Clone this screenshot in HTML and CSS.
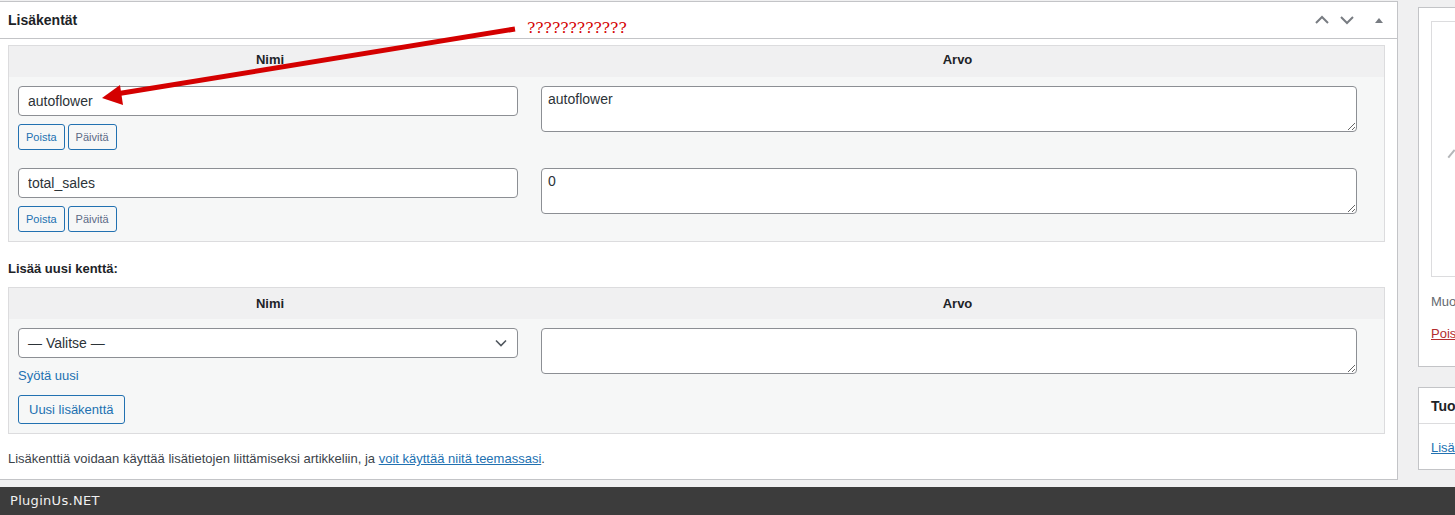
FILE: index.html
```html
<!DOCTYPE html>
<html lang="fi">
<head>
    <meta charset="UTF-8">
    <title>Lisäkentät</title>
    <link rel="stylesheet" href="styles.css">
</head>
<body>
    <div class="wrap">
        <div class="main-col">
            <div class="postbox">
                <div class="postbox-header">
                    <h2>Lisäkentät</h2>
                    <div class="handle-actions">
                        <svg width="14" height="10" viewBox="0 0 14 10"><path d="M1 8 L7 2 L13 8" fill="none" stroke="#787c82" stroke-width="2"/></svg>
                        <svg width="14" height="10" viewBox="0 0 14 10"><path d="M1 2 L7 8 L13 2" fill="none" stroke="#787c82" stroke-width="2"/></svg>
                        <svg class="toggle" width="10" height="8" viewBox="0 0 10 8"><path d="M1 7 L5 2 L9 7 Z" fill="#787c82"/></svg>
                    </div>
                </div>
                <div class="inside">
                    <div class="meta-table">
                        <div class="th">Nimi</div>
                        <div class="th">Arvo</div>

                        <div class="td left">
                            <input type="text" value="autoflower">
                            <div class="row-buttons">
                                <button class="btn-small">Poista</button>
                                <button class="btn-small grey">Päivitä</button>
                            </div>
                        </div>
                        <div class="td right"><textarea>autoflower</textarea></div>

                        <div class="td left">
                            <input type="text" value="total_sales">
                            <div class="row-buttons">
                                <button class="btn-small">Poista</button>
                                <button class="btn-small grey">Päivitä</button>
                            </div>
                        </div>
                        <div class="td right"><textarea>0</textarea></div>
                    </div>

                    <p class="new-title">Lisää uusi kenttä:</p>

                    <div class="meta-table second">
                        <div class="th">Nimi</div>
                        <div class="th">Arvo</div>
                        <div class="td left">
                            <div class="select">
                                <span>— Valitse —</span>
                                <svg width="12" height="8" viewBox="0 0 12 8"><path d="M1 1.5 L6 6.5 L11 1.5" fill="none" stroke="#50575e" stroke-width="1.6"/></svg>
                            </div>
                            <a class="enter-new" href="#">Syötä uusi</a>
                            <button class="btn">Uusi lisäkenttä</button>
                        </div>
                        <div class="td right"><textarea></textarea></div>
                    </div>

                    <p class="note">Lisäkenttiä voidaan käyttää lisätietojen liittämiseksi artikkeliin, ja <a href="#">voit käyttää niitä teemassasi</a>.</p>
                </div>
            </div>
        </div>

        <div class="side-col">
            <div class="sidebox first">
                <div class="thumb"><span class="mark"></span></div>
                <p class="muted">Muokkaa tai päivitä kuvaa</p>
                <p><a class="delete" href="#">Poista tuotekuva</a></p>
            </div>
            <div class="sidebox second">
                <div class="sidebox-header">Tuotegalleria</div>
                <p><a href="#">Lisää tuotegallerian kuvia</a></p>
            </div>
        </div>
    </div>

    <div class="footer-bar">PluginUs.NET</div>

    <!-- annotation over the screenshot -->
    <svg class="annotation" width="540" height="110" viewBox="0 0 540 110">
        <path d="M515 29 L116 94" stroke="#d40000" stroke-width="5" fill="none"/>
        <path d="M102 98 L120 85 L123 105 Z" fill="#d40000"/>
    </svg>
    <span class="annotation-text">????????????</span>
</body>
</html>
```

FILE: styles.css
```css
body {
    margin: 0;
    background-color: #f0f0f1;
    font-family: "Liberation Sans", Arial, sans-serif;
    font-size: 13px;
    color: #3c434a;
    height: 515px;
    overflow: hidden;
    position: relative;
}
.wrap {
    display: flex;
    gap: 20px;
    height: 487px;
}
.main-col {
    width: 1399px;
    margin-left: -1px;
    flex-shrink: 0;
}
.postbox {
    margin-top: 1px;
    background: #fff;
    border: 1px solid #c3c4c7;
    height: 477px;
}
.postbox-header {
    display: flex;
    align-items: center;
    justify-content: space-between;
    height: 36px;
    border-bottom: 1px solid #c3c4c7;
}
.postbox-header h2 {
    margin: 0;
    padding-left: 8px;
    font-size: 14px;
    font-weight: 600;
    color: #1d2327;
}
.handle-actions {
    display: flex;
    align-items: center;
    gap: 11px;
    padding-right: 13px;
}
.handle-actions .toggle {
    margin-left: 9px;
}
.inside {
    padding: 6px 12px 0 8px;
}
.meta-table {
    display: grid;
    grid-template-columns: 522px 1fr;
    border: 1px solid #dcdcde;
    background: #f6f7f7;
}
.th {
    background: #f0f0f1;
    height: 31px;
    line-height: 28px;
    text-align: center;
    font-weight: 600;
    color: #1d2327;
}
.meta-table.second .th {
    line-height: 32px;
}
.td {
    padding: 9px 0;
}
.td.left {
    padding-left: 9px;
}
.td.right {
    padding-left: 10px;
    padding-right: 27px;
}
input[type="text"], .select {
    box-sizing: border-box;
    width: 500px;
    height: 30px;
    border: 1px solid #8c8f94;
    border-radius: 4px;
    background: #fff;
    padding: 0 9px;
    font-family: inherit;
    font-size: 14px;
    color: #2c3338;
    display: block;
}
.select {
    display: flex;
    align-items: center;
    justify-content: space-between;
}
.select svg {
    margin-right: 1px;
}
textarea {
    box-sizing: border-box;
    display: block;
    width: 100%;
    height: 46px;
    border: 1px solid #8c8f94;
    border-radius: 4px;
    background: #fff;
    padding: 4px 6px;
    font-family: inherit;
    font-size: 14px;
    color: #2c3338;
    resize: vertical;
}
.row-buttons {
    display: flex;
    gap: 3px;
    margin-top: 8px;
}
.btn-small {
    height: 26px;
    padding: 0 7px;
    border: 1px solid #2271b1;
    border-radius: 3px;
    background: #f6f7f7;
    color: #2271b1;
    font-family: inherit;
    font-size: 11px;
}
.btn-small.grey {
    color: #5c6a86;
}
.btn {
    display: block;
    height: 29px;
    padding: 0 10px;
    border: 1px solid #2271b1;
    border-radius: 3px;
    background: #f6f7f7;
    color: #2271b1;
    font-family: inherit;
    font-size: 13px;
}
.enter-new {
    display: block;
    margin: 8px 0 9px;
    line-height: 20px;
    color: #2271b1;
    text-decoration: none;
}
.new-title {
    margin: 17px 0 8px;
    line-height: 20px;
    font-weight: 600;
    color: #1d2327;
}
.note {
    margin: 15px 0 0;
    line-height: 20px;
}
.note a {
    color: #2271b1;
}
.side-col {
    width: 280px;
    flex-shrink: 0;
}
.sidebox {
    background: #fff;
    border: 1px solid #c3c4c7;
}
.sidebox.first {
    margin-top: 7px;
    height: 360px;
    padding: 13px 0 0 12px;
    box-sizing: border-box;
}
.thumb {
    height: 254px;
    border: 1px solid #dcdcde;
    position: relative;
}
.thumb .mark {
    position: absolute;
    left: 18px;
    top: 128px;
    width: 4px;
    height: 10px;
    border-left: 2px solid #b4b6b9;
    transform: rotate(40deg);
}
.sidebox p {
    margin: 0;
}
.sidebox .muted {
    margin-top: 15px;
    line-height: 20px;
    color: #646970;
}
.sidebox .delete {
    display: block;
    margin-top: 12px;
    line-height: 20px;
    color: #b32d2e;
}
.sidebox.second {
    margin-top: 20px;
    height: 83px;
    box-sizing: border-box;
}
.sidebox-header {
    height: 35px;
    line-height: 36px;
    padding-left: 12px;
    font-size: 14px;
    font-weight: 600;
    color: #1d2327;
    border-bottom: 1px solid #dcdcde;
}
.sidebox.second p {
    padding: 14px 12px 0;
    line-height: 20px;
}
.sidebox.second a {
    color: #2271b1;
}
.footer-bar {
    height: 28px;
    background: #3c3c3c;
    color: #f0f0f0;
    font-family: "DejaVu Sans", sans-serif;
    font-size: 13px;
    letter-spacing: 0.3px;
    line-height: 28px;
    padding-left: 10px;
}
.annotation {
    position: absolute;
    left: 0;
    top: 0;
}
.annotation-text {
    position: absolute;
    left: 527px;
    top: 19px;
    font-family: "DejaVu Serif", serif;
    font-size: 15.5px;
    color: #d40000;
}
```
